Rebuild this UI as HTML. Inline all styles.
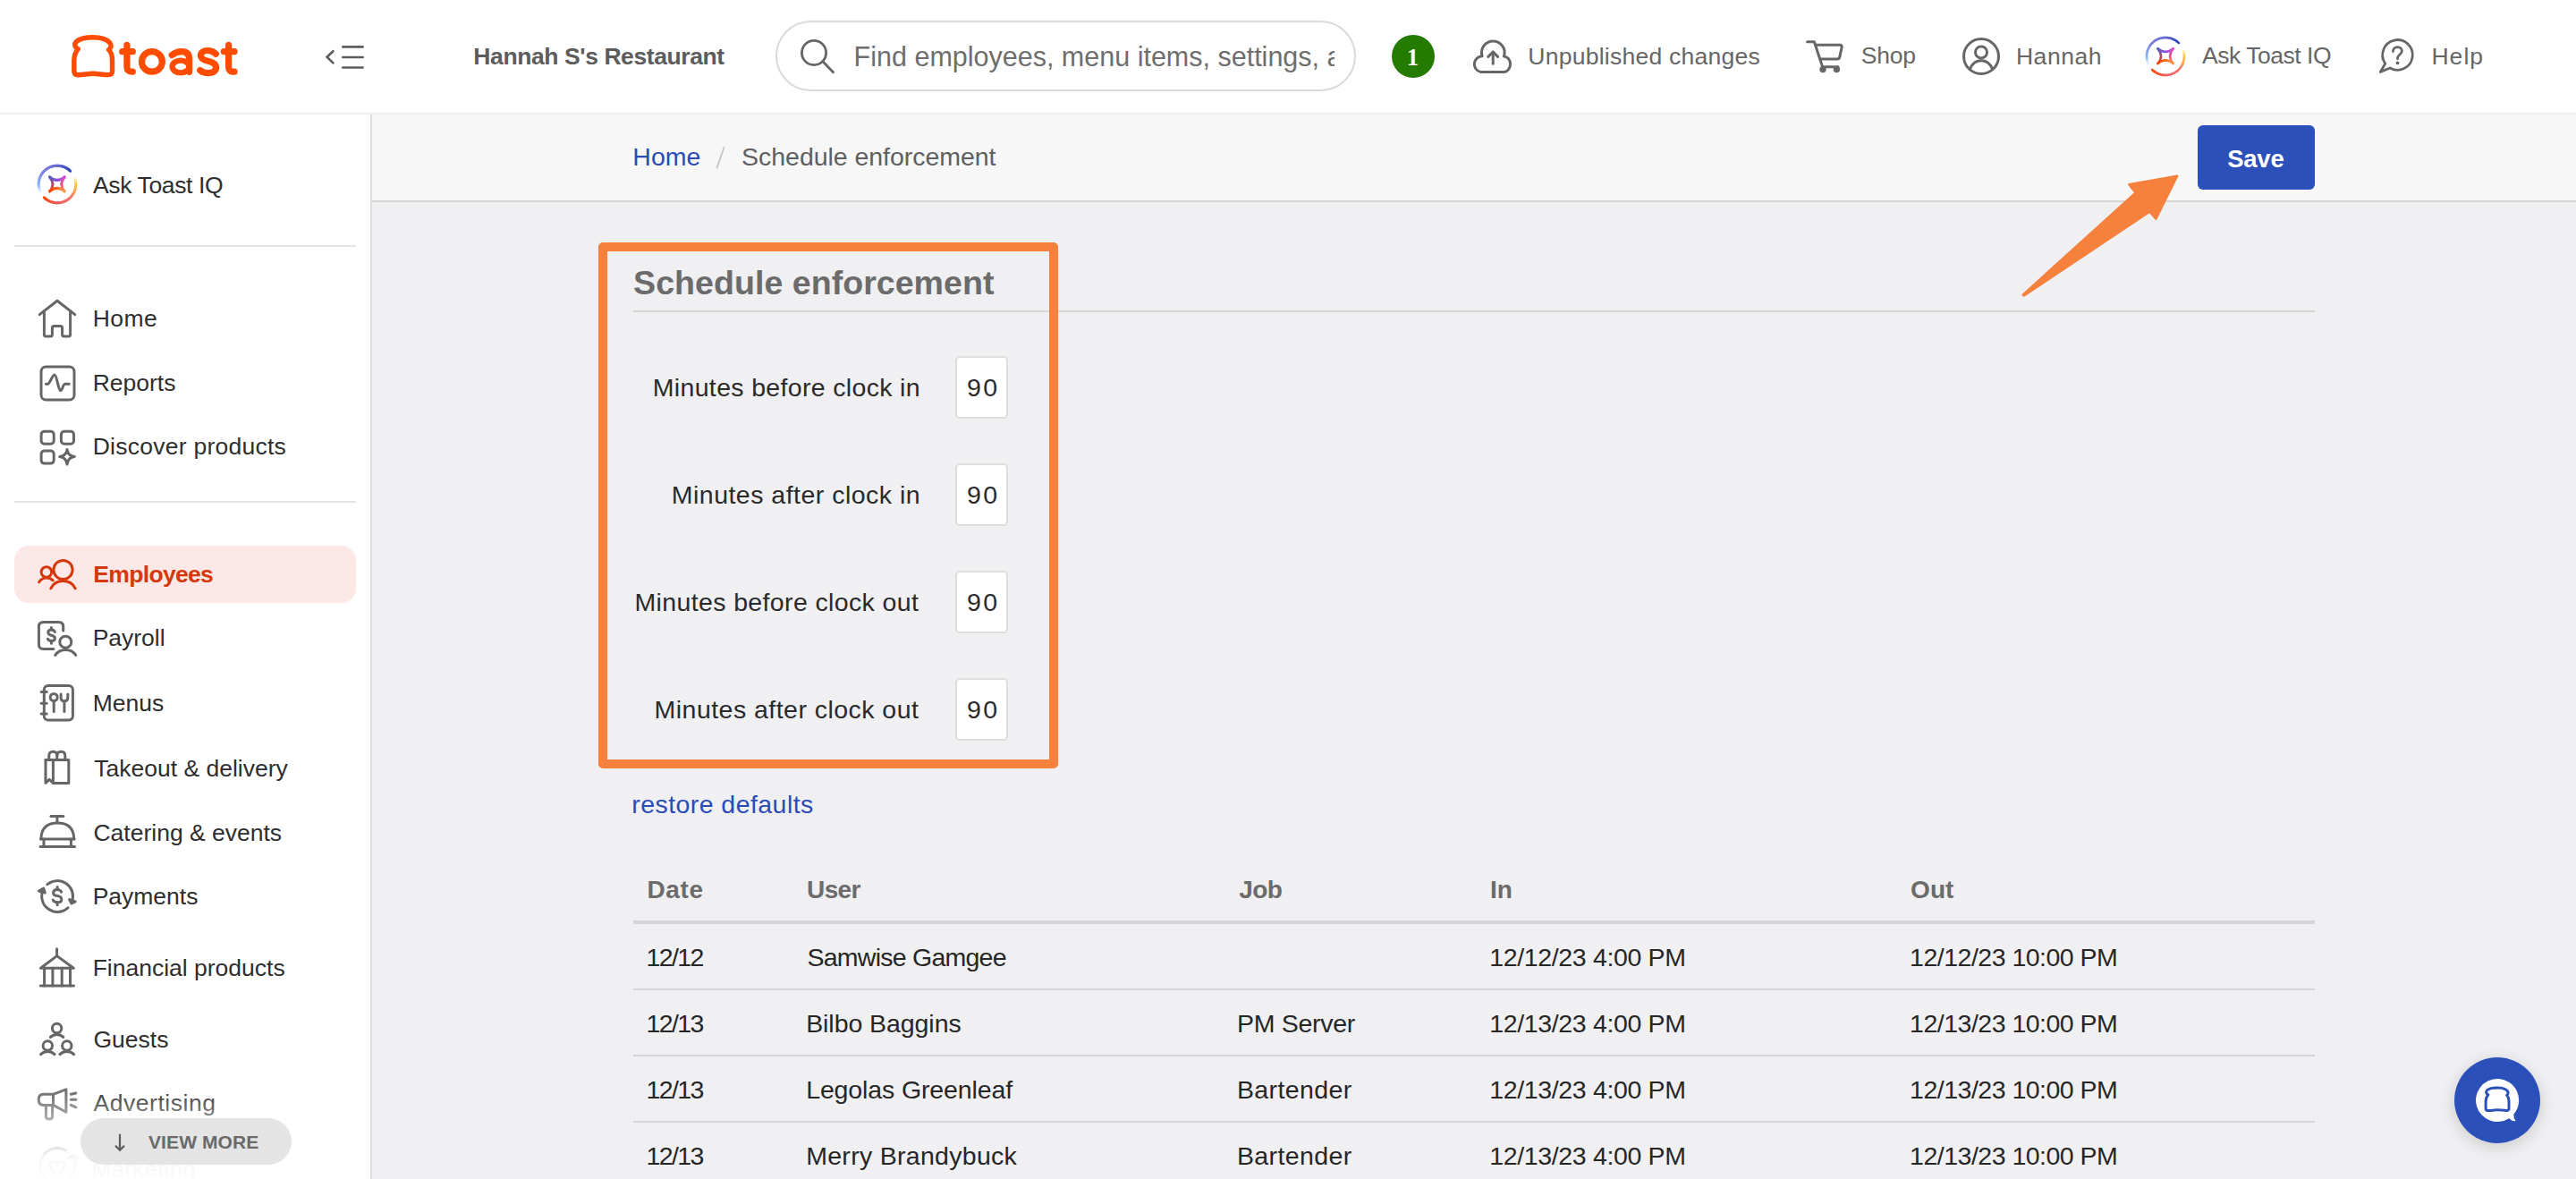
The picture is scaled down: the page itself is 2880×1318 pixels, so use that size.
<!DOCTYPE html>
<html><head><meta charset="utf-8"><title>Schedule enforcement</title>
<style>
html,body{margin:0;padding:0;width:2880px;height:1318px;overflow:hidden;background:#f0f0f2;font-family:"Liberation Sans",sans-serif}
.t{position:absolute;white-space:nowrap;font-family:"Liberation Sans",sans-serif}
svg{overflow:visible}
</style></head><body>
<div style="position:absolute;left:0px;top:0px;width:2880px;height:126px;background:#ffffff;"></div>
<div style="position:absolute;left:0px;top:126px;width:2880px;height:2px;background:#eeeeee;"></div>
<div style="position:absolute;left:0px;top:128px;width:414px;height:1190px;background:#ffffff;"></div>
<div style="position:absolute;left:414px;top:128px;width:2px;height:1190px;background:#dedede;"></div>
<div style="position:absolute;left:416px;top:128px;width:2464px;height:96px;background:#f7f7f7;"></div>
<div style="position:absolute;left:416px;top:224px;width:2464px;height:2px;background:#d5d5d5;"></div>
<div style="position:absolute;left:416px;top:226px;width:2464px;height:1092px;background:#f0f0f2;"></div>
<svg style="position:absolute;left:70px;top:30px;" width="210" height="65" viewBox="0 0 210 65"><g fill="none" stroke="#ff4c00" stroke-linecap="round" stroke-linejoin="round">
<path stroke-width="5.4" d="M17.3,24.8 C13.2,22.6 12.6,19 15.6,16.3 C20.5,12.3 27,11.8 34,11.8 C41,11.8 48,12.6 52.6,17.6 C55,20.6 54.4,23.5 51.6,25.6 C54.6,28.4 55.5,31.5 55.5,38 L55.5,49.5 C55.5,52.5 54,53.6 51,53.6 C45,53.6 40,52.3 34,52.3 C28,52.3 23,53.8 17,53.8 C14.5,53.8 12.8,52.3 12.8,49 L12.8,38 C12.8,31.5 14,28.5 17.3,24.8 Z"/>
<g stroke-width="7.2"><path d="M71.9,20.4 V44.5 C71.9,48.8 73.8,50.2 78.3,50.2"/><path d="M66.7,27.7 H78.3"/>
<ellipse cx="99.9" cy="38.9" rx="11.4" ry="11.3"/>
<path d="M122.2,31.6 C125.5,28.8 129.5,27.6 133,27.6 C138.8,27.6 141.6,30.6 141.6,36.2 V50.3"/>
<ellipse cx="132" cy="44.5" rx="9.4" ry="6.9" stroke-width="6.4"/>
<path d="M171.3,30.4 C168.8,27.6 165.5,26.5 161.8,26.5 C157.2,26.5 154.4,28.9 154.4,32.2 C154.4,35.8 157.8,37.1 162.6,38.3 C168.3,39.6 171.6,41.4 171.6,45.6 C171.6,49.6 168,51.6 162.6,51.6 C158.3,51.6 155.6,50.1 153.7,48.6"/>
<path d="M185.6,20.4 V44.5 C185.6,48.8 187.5,50.2 192,50.2"/><path d="M180.4,27.7 H192"/></g></g></svg>
<svg style="position:absolute;left:355px;top:45px;" width="60" height="40" viewBox="0 0 60 40"><g fill="none" stroke="#5e5e5e" stroke-width="2.7" stroke-linecap="round" stroke-linejoin="miter">
<path d="M17.4,12.2 L10.6,18.8 L17.4,25.4"/><path d="M28.3,7.4 H50.6"/><path d="M28.3,19 H50.6"/><path d="M28.3,30.5 H50.6"/></g></svg>
<div style="position:absolute;left:867px;top:23px;width:645px;height:75px;border:2px solid #dadada;border-radius:40px;background:#fff"></div>
<svg style="position:absolute;left:885px;top:35px;" width="60" height="60" viewBox="0 0 60 60"><g fill="none" stroke="#666" stroke-width="2.8" stroke-linecap="round"><circle cx="25" cy="24" r="13.6"/><path d="M34.7,33.6 L46.5,45.7"/></g></svg>
<div class="t" style="left:529.34px;top:49.74px;font-size:26.5px;line-height:26.5px;font-weight:bold;color:#5c5c5c;letter-spacing:-0.413px;font-family:'Liberation Sans';">Hannah S's Restaurant</div>
<div style="position:absolute;left:940px;top:30px;width:552px;height:70px;overflow:hidden">
<div class="t" style="left:14.62px;top:18.38px;font-size:30.5px;line-height:30.5px;font-weight:normal;color:#6e6e6e;letter-spacing:0.000px;font-family:'Liberation Sans';">Find employees, menu items, settings, and more</div>
</div>
<div style="position:absolute;left:1556px;top:39px;width:48px;height:48px;border-radius:24px;background:#257b00"></div>
<svg style="position:absolute;left:1644px;top:44px;" width="50" height="42" viewBox="0 0 50 42"><g fill="none" stroke="#666" stroke-width="3" stroke-linecap="round" stroke-linejoin="round">
<path d="M11,36.4 H38 A7.6,8.8 0 0 0 37.4,18.9 A12.8,12.8 0 1 0 13.1,18.7 A9,9 0 0 0 11,36.4 Z"/>
<path d="M25.2,27.2 V14"/><path d="M19.8,19.4 L25.2,14 L30.6,19.4"/></g></svg>
<svg style="position:absolute;left:2010px;top:30px;" width="60" height="60" viewBox="0 0 60 60"><g fill="none" stroke="#666" stroke-width="3" stroke-linecap="round" stroke-linejoin="round">
<path d="M10.6,16.8 H18.4 L27.6,44.8 H45"/><path d="M19.6,20.3 H47 Q49.6,20.3 49.1,22.8 L46.8,33.6 Q46.3,36 43.8,36 H25"/></g>
<g fill="#666"><circle cx="28" cy="47.6" r="3.7"/><circle cx="43.4" cy="47.6" r="3.7"/></g></svg>
<svg style="position:absolute;left:2190px;top:38px;" width="50" height="50" viewBox="0 0 50 50"><g fill="none" stroke="#666" stroke-width="3" stroke-linecap="round">
<circle cx="25" cy="25" r="19.5"/><circle cx="25" cy="20.4" r="6.5"/><path d="M12.6,38.8 C15,33.2 19.6,29.8 25,29.8 C30.4,29.8 35,33.2 37.4,38.8"/></g></svg>
<svg style="position:absolute;left:2390px;top:30px;" width="60" height="66" viewBox="0 0 60 66"><defs>
<linearGradient id="iqT31" gradientUnits="userSpaceOnUse" x1="22.40000000000009" y1="0" x2="39.69999999999982" y2="0"><stop offset="0" stop-color="#4b62cc"/><stop offset="0.5" stop-color="#8a4fd8"/><stop offset="1" stop-color="#d84ad6"/></linearGradient>
<linearGradient id="iqB31" gradientUnits="userSpaceOnUse" x1="22.40000000000009" y1="0" x2="39.69999999999982" y2="0"><stop offset="0" stop-color="#ff4300"/><stop offset="0.5" stop-color="#ff6a20"/><stop offset="1" stop-color="#ffa048"/></linearGradient>
<linearGradient id="iqL31" gradientUnits="userSpaceOnUse" x1="0" y1="24.299999999999997" x2="0" y2="41"><stop offset="0" stop-color="#5a5ac8"/><stop offset="0.5" stop-color="#b04870"/><stop offset="1" stop-color="#ff4a00"/></linearGradient>
<linearGradient id="iqR31" gradientUnits="userSpaceOnUse" x1="0" y1="24.299999999999997" x2="0" y2="41"><stop offset="0" stop-color="#d84ad6"/><stop offset="0.5" stop-color="#e8508a"/><stop offset="1" stop-color="#ff9a40"/></linearGradient></defs><path d="M50.77,25.92 A21,21 0 0 0 50.33,24.79" stroke="#fffcf1" stroke-width="2.6" fill="none" stroke-linecap="butt"/><path d="M51.14,27.06 A21,21 0 0 0 50.51,25.24" stroke="#fff5d6" stroke-width="2.6" fill="none" stroke-linecap="butt"/><path d="M51.45,28.23 A21,21 0 0 0 50.93,26.37" stroke="#ffeebb" stroke-width="2.6" fill="none" stroke-linecap="butt"/><path d="M51.69,29.41 A21,21 0 0 0 51.27,27.53" stroke="#ffe79f" stroke-width="2.6" fill="none" stroke-linecap="butt"/><path d="M51.86,30.61 A21,21 0 0 0 51.56,28.70" stroke="#ffe184" stroke-width="2.6" fill="none" stroke-linecap="butt"/><path d="M51.97,31.81 A21,21 0 0 0 51.77,29.89" stroke="#ffda69" stroke-width="2.6" fill="none" stroke-linecap="butt"/><path d="M52.00,33.02 A21,21 0 0 0 51.91,31.09" stroke="#ffd34d" stroke-width="2.6" fill="none" stroke-linecap="butt"/><path d="M51.96,34.22 A21,21 0 0 0 51.99,32.29" stroke="#ffcd42" stroke-width="2.6" fill="none" stroke-linecap="butt"/><path d="M51.86,35.42 A21,21 0 0 0 51.99,33.50" stroke="#fec645" stroke-width="2.6" fill="none" stroke-linecap="butt"/><path d="M51.69,36.62 A21,21 0 0 0 51.93,34.70" stroke="#fdc048" stroke-width="2.6" fill="none" stroke-linecap="butt"/><path d="M51.44,37.80 A21,21 0 0 0 51.80,35.90" stroke="#fdb94c" stroke-width="2.6" fill="none" stroke-linecap="butt"/><path d="M51.14,38.96 A21,21 0 0 0 51.60,37.09" stroke="#fcb34f" stroke-width="2.6" fill="none" stroke-linecap="butt"/><path d="M50.76,40.11 A21,21 0 0 0 51.33,38.27" stroke="#fbad53" stroke-width="2.6" fill="none" stroke-linecap="butt"/><path d="M50.32,41.23 A21,21 0 0 0 50.99,39.43" stroke="#fba656" stroke-width="2.6" fill="none" stroke-linecap="butt"/><path d="M49.81,42.33 A21,21 0 0 0 50.59,40.56" stroke="#faa059" stroke-width="2.6" fill="none" stroke-linecap="butt"/><path d="M49.25,43.39 A21,21 0 0 0 50.12,41.68" stroke="#f9995d" stroke-width="2.6" fill="none" stroke-linecap="butt"/><path d="M48.62,44.42 A21,21 0 0 0 49.59,42.76" stroke="#f99360" stroke-width="2.6" fill="none" stroke-linecap="butt"/><path d="M47.94,45.42 A21,21 0 0 0 49.00,43.81" stroke="#f88c63" stroke-width="2.6" fill="none" stroke-linecap="butt"/><path d="M47.19,46.37 A21,21 0 0 0 48.35,44.83" stroke="#f78667" stroke-width="2.6" fill="none" stroke-linecap="butt"/><path d="M46.40,47.28 A21,21 0 0 0 47.65,45.80" stroke="#f77f6a" stroke-width="2.6" fill="none" stroke-linecap="butt"/><path d="M45.55,48.14 A21,21 0 0 0 46.88,46.74" stroke="#f6796d" stroke-width="2.6" fill="none" stroke-linecap="butt"/><path d="M44.66,48.95 A21,21 0 0 0 46.07,47.63" stroke="#f6766d" stroke-width="2.6" fill="none" stroke-linecap="butt"/><path d="M43.72,49.71 A21,21 0 0 0 45.20,48.47" stroke="#f5746d" stroke-width="2.6" fill="none" stroke-linecap="butt"/><path d="M42.74,50.41 A21,21 0 0 0 44.29,49.26" stroke="#f5726c" stroke-width="2.6" fill="none" stroke-linecap="butt"/><path d="M41.72,51.06 A21,21 0 0 0 43.34,49.99" stroke="#f4706b" stroke-width="2.6" fill="none" stroke-linecap="butt"/><path d="M40.67,51.64 A21,21 0 0 0 42.34,50.68" stroke="#f46e6a" stroke-width="2.6" fill="none" stroke-linecap="butt"/><path d="M39.58,52.17 A21,21 0 0 0 41.31,51.30" stroke="#f36c6a" stroke-width="2.6" fill="none" stroke-linecap="butt"/><path d="M38.47,52.63 A21,21 0 0 0 40.24,51.86" stroke="#f36a69" stroke-width="2.6" fill="none" stroke-linecap="butt"/><path d="M37.33,53.02 A21,21 0 0 0 39.14,52.36" stroke="#f36868" stroke-width="2.6" fill="none" stroke-linecap="butt"/><path d="M36.17,53.35 A21,21 0 0 0 38.02,52.79" stroke="#f26668" stroke-width="2.6" fill="none" stroke-linecap="butt"/><path d="M34.99,53.62 A21,21 0 0 0 36.87,53.16" stroke="#f26467" stroke-width="2.6" fill="none" stroke-linecap="butt"/><path d="M33.80,53.81 A21,21 0 0 0 35.70,53.47" stroke="#f16266" stroke-width="2.6" fill="none" stroke-linecap="butt"/><path d="M32.60,53.94 A21,21 0 0 0 34.52,53.70" stroke="#f16065" stroke-width="2.6" fill="none" stroke-linecap="butt"/><path d="M31.40,54.00 A21,21 0 0 0 33.32,53.87" stroke="#f05e65" stroke-width="2.6" fill="none" stroke-linecap="butt"/><path d="M30.19,53.98 A21,21 0 0 0 32.12,53.97" stroke="#f05c63" stroke-width="2.6" fill="none" stroke-linecap="butt"/><path d="M28.99,53.90 A21,21 0 0 0 30.91,54.00" stroke="#f15a5d" stroke-width="2.6" fill="none" stroke-linecap="butt"/><path d="M27.79,53.75 A21,21 0 0 0 29.71,53.96" stroke="#f25957" stroke-width="2.6" fill="none" stroke-linecap="butt"/><path d="M26.60,53.53 A21,21 0 0 0 28.51,53.85" stroke="#f35851" stroke-width="2.6" fill="none" stroke-linecap="butt"/><path d="M25.43,53.25 A21,21 0 0 0 27.31,53.67" stroke="#f5574a" stroke-width="2.6" fill="none" stroke-linecap="butt"/><path d="M24.28,52.90 A21,21 0 0 0 26.13,53.43" stroke="#f65544" stroke-width="2.6" fill="none" stroke-linecap="butt"/><path d="M23.15,52.48 A21,21 0 0 0 24.97,53.12" stroke="#f7543e" stroke-width="2.6" fill="none" stroke-linecap="butt"/><path d="M22.04,51.99 A21,21 0 0 0 23.82,52.74" stroke="#f85338" stroke-width="2.6" fill="none" stroke-linecap="butt"/><path d="M20.97,51.45 A21,21 0 0 0 22.70,52.29" stroke="#f95132" stroke-width="2.6" fill="none" stroke-linecap="butt"/><path d="M19.92,50.84 A21,21 0 0 0 21.61,51.78" stroke="#fa502c" stroke-width="2.6" fill="none" stroke-linecap="butt"/><path d="M18.92,50.18 A21,21 0 0 0 20.54,51.21" stroke="#fb4f26" stroke-width="2.6" fill="none" stroke-linecap="butt"/><path d="M17.95,49.45 A21,21 0 0 0 19.52,50.58" stroke="#fc4d1f" stroke-width="2.6" fill="none" stroke-linecap="butt"/><path d="M17.03,48.68 A21,21 0 0 0 18.53,49.89" stroke="#fd4c19" stroke-width="2.6" fill="none" stroke-linecap="butt"/><path d="M16.15,47.85 A21,21 0 0 0 17.58,49.15" stroke="#fe4b13" stroke-width="2.6" fill="none" stroke-linecap="round"/><path d="M11.62,41.09 A21,21 0 0 0 12.13,42.21" stroke="#f7faff" stroke-width="2.6" fill="none" stroke-linecap="butt"/><path d="M11.18,39.94 A21,21 0 0 0 11.91,41.76" stroke="#e8f1ff" stroke-width="2.6" fill="none" stroke-linecap="butt"/><path d="M10.81,38.77 A21,21 0 0 0 11.44,40.63" stroke="#d9e8ff" stroke-width="2.6" fill="none" stroke-linecap="butt"/><path d="M10.50,37.58 A21,21 0 0 0 11.02,39.47" stroke="#cadfff" stroke-width="2.6" fill="none" stroke-linecap="butt"/><path d="M10.27,36.37 A21,21 0 0 0 10.68,38.29" stroke="#bbd6ff" stroke-width="2.6" fill="none" stroke-linecap="butt"/><path d="M10.11,35.15 A21,21 0 0 0 10.40,37.09" stroke="#accdff" stroke-width="2.6" fill="none" stroke-linecap="butt"/><path d="M10.02,33.92 A21,21 0 0 0 10.20,35.88" stroke="#9dc3ff" stroke-width="2.6" fill="none" stroke-linecap="butt"/><path d="M10.00,32.69 A21,21 0 0 0 10.07,34.66" stroke="#8ebaff" stroke-width="2.6" fill="none" stroke-linecap="butt"/><path d="M10.06,31.47 A21,21 0 0 0 10.00,33.43" stroke="#89b5fd" stroke-width="2.6" fill="none" stroke-linecap="butt"/><path d="M10.18,30.24 A21,21 0 0 0 10.02,32.20" stroke="#88b0fa" stroke-width="2.6" fill="none" stroke-linecap="butt"/><path d="M10.38,29.03 A21,21 0 0 0 10.10,30.98" stroke="#88acf8" stroke-width="2.6" fill="none" stroke-linecap="butt"/><path d="M10.65,27.83 A21,21 0 0 0 10.25,29.76" stroke="#87a8f5" stroke-width="2.6" fill="none" stroke-linecap="butt"/><path d="M10.98,26.65 A21,21 0 0 0 10.48,28.55" stroke="#86a3f3" stroke-width="2.6" fill="none" stroke-linecap="butt"/><path d="M11.39,25.49 A21,21 0 0 0 10.77,27.36" stroke="#859ff0" stroke-width="2.6" fill="none" stroke-linecap="butt"/><path d="M11.86,24.35 A21,21 0 0 0 11.14,26.18" stroke="#849aed" stroke-width="2.6" fill="none" stroke-linecap="butt"/><path d="M12.40,23.25 A21,21 0 0 0 11.57,25.03" stroke="#8396eb" stroke-width="2.6" fill="none" stroke-linecap="butt"/><path d="M13.00,22.18 A21,21 0 0 0 12.07,23.91" stroke="#8292e8" stroke-width="2.6" fill="none" stroke-linecap="butt"/><path d="M13.67,21.14 A21,21 0 0 0 12.63,22.82" stroke="#818de6" stroke-width="2.6" fill="none" stroke-linecap="butt"/><path d="M14.39,20.15 A21,21 0 0 0 13.26,21.76" stroke="#8089e3" stroke-width="2.6" fill="none" stroke-linecap="butt"/><path d="M15.17,19.20 A21,21 0 0 0 13.95,20.74" stroke="#7f84e0" stroke-width="2.6" fill="none" stroke-linecap="butt"/><path d="M16.01,18.30 A21,21 0 0 0 14.70,19.76" stroke="#7f80de" stroke-width="2.6" fill="none" stroke-linecap="butt"/><path d="M16.89,17.45 A21,21 0 0 0 15.50,18.83" stroke="#7d7ddc" stroke-width="2.6" fill="none" stroke-linecap="butt"/><path d="M17.83,16.65 A21,21 0 0 0 16.35,17.95" stroke="#7c7bdb" stroke-width="2.6" fill="none" stroke-linecap="butt"/><path d="M18.81,15.90 A21,21 0 0 0 17.26,17.12" stroke="#7a7ada" stroke-width="2.6" fill="none" stroke-linecap="butt"/><path d="M19.83,15.22 A21,21 0 0 0 18.21,16.34" stroke="#7978da" stroke-width="2.6" fill="none" stroke-linecap="butt"/><path d="M20.89,14.60 A21,21 0 0 0 19.21,15.62" stroke="#7777d9" stroke-width="2.6" fill="none" stroke-linecap="butt"/><path d="M21.98,14.04 A21,21 0 0 0 20.25,14.96" stroke="#7575d8" stroke-width="2.6" fill="none" stroke-linecap="butt"/><path d="M23.10,13.54 A21,21 0 0 0 21.32,14.36" stroke="#7474d7" stroke-width="2.6" fill="none" stroke-linecap="butt"/><path d="M24.26,13.11 A21,21 0 0 0 22.43,13.83" stroke="#7273d7" stroke-width="2.6" fill="none" stroke-linecap="butt"/><path d="M25.43,12.75 A21,21 0 0 0 23.56,13.36" stroke="#7071d6" stroke-width="2.6" fill="none" stroke-linecap="butt"/><path d="M26.63,12.46 A21,21 0 0 0 24.72,12.96" stroke="#6f70d5" stroke-width="2.6" fill="none" stroke-linecap="butt"/><path d="M27.84,12.24 A21,21 0 0 0 25.91,12.63" stroke="#6d6ed4" stroke-width="2.6" fill="none" stroke-linecap="butt"/><path d="M29.06,12.09 A21,21 0 0 0 27.11,12.36" stroke="#6b6dd4" stroke-width="2.6" fill="none" stroke-linecap="butt"/><path d="M30.28,12.01 A21,21 0 0 0 28.32,12.17" stroke="#6a6cd3" stroke-width="2.6" fill="none" stroke-linecap="butt"/><path d="M31.51,12.01 A21,21 0 0 0 29.55,12.05" stroke="#686ad2" stroke-width="2.6" fill="none" stroke-linecap="butt"/><path d="M32.74,12.07 A21,21 0 0 0 30.77,12.00" stroke="#6467d0" stroke-width="2.6" fill="none" stroke-linecap="butt"/><path d="M33.96,12.21 A21,21 0 0 0 32.00,12.02" stroke="#5f65ce" stroke-width="2.6" fill="none" stroke-linecap="butt"/><path d="M35.17,12.42 A21,21 0 0 0 33.23,12.12" stroke="#5b62cc" stroke-width="2.6" fill="none" stroke-linecap="butt"/><path d="M36.37,12.70 A21,21 0 0 0 34.45,12.28" stroke="#565fca" stroke-width="2.6" fill="none" stroke-linecap="butt"/><path d="M37.55,13.05 A21,21 0 0 0 35.65,12.52" stroke="#525cc8" stroke-width="2.6" fill="none" stroke-linecap="butt"/><path d="M38.70,13.46 A21,21 0 0 0 36.84,12.83" stroke="#4d5ac7" stroke-width="2.6" fill="none" stroke-linecap="butt"/><path d="M39.83,13.95 A21,21 0 0 0 38.01,13.21" stroke="#4957c5" stroke-width="2.6" fill="none" stroke-linecap="butt"/><path d="M40.93,14.50 A21,21 0 0 0 39.16,13.65" stroke="#4454c3" stroke-width="2.6" fill="none" stroke-linecap="butt"/><path d="M42.00,15.11 A21,21 0 0 0 40.28,14.16" stroke="#3f51c1" stroke-width="2.6" fill="none" stroke-linecap="butt"/><path d="M43.03,15.78 A21,21 0 0 0 41.36,14.74" stroke="#3b4fbf" stroke-width="2.6" fill="none" stroke-linecap="butt"/><path d="M44.01,16.52 A21,21 0 0 0 42.41,15.37" stroke="#364cbd" stroke-width="2.6" fill="none" stroke-linecap="butt"/><path d="M44.96,17.31 A21,21 0 0 0 43.43,16.07" stroke="#3249bb" stroke-width="2.6" fill="none" stroke-linecap="butt"/><path d="M45.85,18.15 A21,21 0 0 0 44.40,16.83" stroke="#2d46b9" stroke-width="2.6" fill="none" stroke-linecap="round"/><path d="M22.40000000000009,24.299999999999997 Q31.049999999999955,31.496799999999883 39.69999999999982,24.299999999999997" stroke="url(#iqT31)" stroke-width="2.6" fill="none" stroke-linecap="round"/><path d="M22.40000000000009,41 Q31.049999999999955,33.80320000000011 39.69999999999982,41" stroke="url(#iqB31)" stroke-width="2.6" fill="none" stroke-linecap="round"/><path d="M22.40000000000009,24.299999999999997 Q29.596799999999977,32.65 22.40000000000009,41" stroke="url(#iqL31)" stroke-width="2.6" fill="none" stroke-linecap="round"/><path d="M39.69999999999982,24.299999999999997 Q32.50319999999993,32.65 39.69999999999982,41" stroke="url(#iqR31)" stroke-width="2.6" fill="none" stroke-linecap="round"/></svg>
<svg style="position:absolute;left:2650px;top:35px;" width="60" height="55" viewBox="0 0 60 55"><g fill="none" stroke="#666" stroke-width="2.8" stroke-linecap="round" stroke-linejoin="round">
<path d="M16.74,36.04 A16.8,16.8 0 1 1 22.1,40.95 L11.3,45.5 Z"/>
<path d="M25.4,22.6 C25.4,19.4 27.6,17.6 30.4,17.6 C33.2,17.6 35.4,19.5 35.4,22.2 C35.4,25.4 30.5,26.2 30.5,30.2 V30.8"/></g>
<circle cx="30.5" cy="35.4" r="1.9" fill="#666"/></svg>
<svg style="position:absolute;left:34px;top:176px;" width="60" height="60" viewBox="0 0 60 60"><defs>
<linearGradient id="iqT30" gradientUnits="userSpaceOnUse" x1="21.5" y1="0" x2="38.2" y2="0"><stop offset="0" stop-color="#4b62cc"/><stop offset="0.5" stop-color="#8a4fd8"/><stop offset="1" stop-color="#d84ad6"/></linearGradient>
<linearGradient id="iqB30" gradientUnits="userSpaceOnUse" x1="21.5" y1="0" x2="38.2" y2="0"><stop offset="0" stop-color="#ff4300"/><stop offset="0.5" stop-color="#ff6a20"/><stop offset="1" stop-color="#ffa048"/></linearGradient>
<linearGradient id="iqL30" gradientUnits="userSpaceOnUse" x1="0" y1="21.900000000000006" x2="0" y2="37.900000000000006"><stop offset="0" stop-color="#5a5ac8"/><stop offset="0.5" stop-color="#b04870"/><stop offset="1" stop-color="#ff4a00"/></linearGradient>
<linearGradient id="iqR30" gradientUnits="userSpaceOnUse" x1="0" y1="21.900000000000006" x2="0" y2="37.900000000000006"><stop offset="0" stop-color="#d84ad6"/><stop offset="0.5" stop-color="#e8508a"/><stop offset="1" stop-color="#ff9a40"/></linearGradient></defs><path d="M49.58,22.99 A20.8,20.8 0 0 0 49.15,21.87" stroke="#fffcf1" stroke-width="3" fill="none" stroke-linecap="butt"/><path d="M49.95,24.12 A20.8,20.8 0 0 0 49.33,22.31" stroke="#fff5d6" stroke-width="3" fill="none" stroke-linecap="butt"/><path d="M50.26,25.28 A20.8,20.8 0 0 0 49.74,23.44" stroke="#ffeebb" stroke-width="3" fill="none" stroke-linecap="butt"/><path d="M50.49,26.45 A20.8,20.8 0 0 0 50.08,24.58" stroke="#ffe79f" stroke-width="3" fill="none" stroke-linecap="butt"/><path d="M50.66,27.63 A20.8,20.8 0 0 0 50.36,25.74" stroke="#ffe184" stroke-width="3" fill="none" stroke-linecap="butt"/><path d="M50.77,28.82 A20.8,20.8 0 0 0 50.57,26.92" stroke="#ffda69" stroke-width="3" fill="none" stroke-linecap="butt"/><path d="M50.80,30.02 A20.8,20.8 0 0 0 50.71,28.11" stroke="#ffd34d" stroke-width="3" fill="none" stroke-linecap="butt"/><path d="M50.76,31.21 A20.8,20.8 0 0 0 50.79,29.30" stroke="#ffcd42" stroke-width="3" fill="none" stroke-linecap="butt"/><path d="M50.66,32.40 A20.8,20.8 0 0 0 50.79,30.49" stroke="#fec645" stroke-width="3" fill="none" stroke-linecap="butt"/><path d="M50.49,33.58 A20.8,20.8 0 0 0 50.73,31.69" stroke="#fdc048" stroke-width="3" fill="none" stroke-linecap="butt"/><path d="M50.25,34.75 A20.8,20.8 0 0 0 50.60,32.87" stroke="#fdb94c" stroke-width="3" fill="none" stroke-linecap="butt"/><path d="M49.94,35.91 A20.8,20.8 0 0 0 50.40,34.05" stroke="#fcb34f" stroke-width="3" fill="none" stroke-linecap="butt"/><path d="M49.57,37.04 A20.8,20.8 0 0 0 50.14,35.22" stroke="#fbad53" stroke-width="3" fill="none" stroke-linecap="butt"/><path d="M49.13,38.16 A20.8,20.8 0 0 0 49.80,36.36" stroke="#fba656" stroke-width="3" fill="none" stroke-linecap="butt"/><path d="M48.63,39.24 A20.8,20.8 0 0 0 49.40,37.49" stroke="#faa059" stroke-width="3" fill="none" stroke-linecap="butt"/><path d="M48.07,40.30 A20.8,20.8 0 0 0 48.94,38.59" stroke="#f9995d" stroke-width="3" fill="none" stroke-linecap="butt"/><path d="M47.45,41.32 A20.8,20.8 0 0 0 48.42,39.67" stroke="#f99360" stroke-width="3" fill="none" stroke-linecap="butt"/><path d="M46.77,42.30 A20.8,20.8 0 0 0 47.83,40.71" stroke="#f88c63" stroke-width="3" fill="none" stroke-linecap="butt"/><path d="M46.04,43.24 A20.8,20.8 0 0 0 47.19,41.71" stroke="#f78667" stroke-width="3" fill="none" stroke-linecap="butt"/><path d="M45.25,44.14 A20.8,20.8 0 0 0 46.49,42.68" stroke="#f77f6a" stroke-width="3" fill="none" stroke-linecap="butt"/><path d="M44.42,44.99 A20.8,20.8 0 0 0 45.73,43.61" stroke="#f6796d" stroke-width="3" fill="none" stroke-linecap="butt"/><path d="M43.53,45.80 A20.8,20.8 0 0 0 44.92,44.49" stroke="#f6766d" stroke-width="3" fill="none" stroke-linecap="butt"/><path d="M42.60,46.55 A20.8,20.8 0 0 0 44.07,45.32" stroke="#f5746d" stroke-width="3" fill="none" stroke-linecap="butt"/><path d="M41.63,47.24 A20.8,20.8 0 0 0 43.16,46.10" stroke="#f5726c" stroke-width="3" fill="none" stroke-linecap="butt"/><path d="M40.62,47.88 A20.8,20.8 0 0 0 42.22,46.83" stroke="#f4706b" stroke-width="3" fill="none" stroke-linecap="butt"/><path d="M39.58,48.46 A20.8,20.8 0 0 0 41.23,47.51" stroke="#f46e6a" stroke-width="3" fill="none" stroke-linecap="butt"/><path d="M38.50,48.98 A20.8,20.8 0 0 0 40.21,48.12" stroke="#f36c6a" stroke-width="3" fill="none" stroke-linecap="butt"/><path d="M37.40,49.44 A20.8,20.8 0 0 0 39.15,48.68" stroke="#f36a69" stroke-width="3" fill="none" stroke-linecap="butt"/><path d="M36.27,49.83 A20.8,20.8 0 0 0 38.06,49.17" stroke="#f36868" stroke-width="3" fill="none" stroke-linecap="butt"/><path d="M35.12,50.16 A20.8,20.8 0 0 0 36.95,49.60" stroke="#f26668" stroke-width="3" fill="none" stroke-linecap="butt"/><path d="M33.95,50.42 A20.8,20.8 0 0 0 35.81,49.97" stroke="#f26467" stroke-width="3" fill="none" stroke-linecap="butt"/><path d="M32.77,50.61 A20.8,20.8 0 0 0 34.66,50.27" stroke="#f16266" stroke-width="3" fill="none" stroke-linecap="butt"/><path d="M31.59,50.74 A20.8,20.8 0 0 0 33.48,50.51" stroke="#f16065" stroke-width="3" fill="none" stroke-linecap="butt"/><path d="M30.39,50.80 A20.8,20.8 0 0 0 32.30,50.67" stroke="#f05e65" stroke-width="3" fill="none" stroke-linecap="butt"/><path d="M29.20,50.78 A20.8,20.8 0 0 0 31.11,50.77" stroke="#f05c63" stroke-width="3" fill="none" stroke-linecap="butt"/><path d="M28.01,50.70 A20.8,20.8 0 0 0 29.92,50.80" stroke="#f15a5d" stroke-width="3" fill="none" stroke-linecap="butt"/><path d="M26.82,50.56 A20.8,20.8 0 0 0 28.72,50.76" stroke="#f25957" stroke-width="3" fill="none" stroke-linecap="butt"/><path d="M25.65,50.34 A20.8,20.8 0 0 0 27.53,50.65" stroke="#f35851" stroke-width="3" fill="none" stroke-linecap="butt"/><path d="M24.49,50.06 A20.8,20.8 0 0 0 26.35,50.48" stroke="#f5574a" stroke-width="3" fill="none" stroke-linecap="butt"/><path d="M23.34,49.71 A20.8,20.8 0 0 0 25.18,50.23" stroke="#f65544" stroke-width="3" fill="none" stroke-linecap="butt"/><path d="M22.22,49.29 A20.8,20.8 0 0 0 24.03,49.92" stroke="#f7543e" stroke-width="3" fill="none" stroke-linecap="butt"/><path d="M21.13,48.81 A20.8,20.8 0 0 0 22.89,49.55" stroke="#f85338" stroke-width="3" fill="none" stroke-linecap="butt"/><path d="M20.06,48.27 A20.8,20.8 0 0 0 21.78,49.11" stroke="#f95132" stroke-width="3" fill="none" stroke-linecap="butt"/><path d="M19.03,47.67 A20.8,20.8 0 0 0 20.70,48.60" stroke="#fa502c" stroke-width="3" fill="none" stroke-linecap="butt"/><path d="M18.03,47.01 A20.8,20.8 0 0 0 19.64,48.04" stroke="#fb4f26" stroke-width="3" fill="none" stroke-linecap="butt"/><path d="M17.08,46.30 A20.8,20.8 0 0 0 18.63,47.41" stroke="#fc4d1f" stroke-width="3" fill="none" stroke-linecap="butt"/><path d="M16.16,45.53 A20.8,20.8 0 0 0 17.64,46.73" stroke="#fd4c19" stroke-width="3" fill="none" stroke-linecap="butt"/><path d="M15.29,44.71 A20.8,20.8 0 0 0 16.70,46.00" stroke="#fe4b13" stroke-width="3" fill="none" stroke-linecap="round"/><path d="M10.80,38.01 A20.8,20.8 0 0 0 11.31,39.12" stroke="#f7faff" stroke-width="3" fill="none" stroke-linecap="butt"/><path d="M10.37,36.87 A20.8,20.8 0 0 0 11.10,38.68" stroke="#e8f1ff" stroke-width="3" fill="none" stroke-linecap="butt"/><path d="M10.00,35.71 A20.8,20.8 0 0 0 10.62,37.56" stroke="#d9e8ff" stroke-width="3" fill="none" stroke-linecap="butt"/><path d="M9.70,34.53 A20.8,20.8 0 0 0 10.21,36.41" stroke="#cadfff" stroke-width="3" fill="none" stroke-linecap="butt"/><path d="M9.47,33.34 A20.8,20.8 0 0 0 9.87,35.24" stroke="#bbd6ff" stroke-width="3" fill="none" stroke-linecap="butt"/><path d="M9.31,32.13 A20.8,20.8 0 0 0 9.60,34.05" stroke="#accdff" stroke-width="3" fill="none" stroke-linecap="butt"/><path d="M9.22,30.91 A20.8,20.8 0 0 0 9.40,32.85" stroke="#9dc3ff" stroke-width="3" fill="none" stroke-linecap="butt"/><path d="M9.20,29.70 A20.8,20.8 0 0 0 9.27,31.64" stroke="#8ebaff" stroke-width="3" fill="none" stroke-linecap="butt"/><path d="M9.26,28.48 A20.8,20.8 0 0 0 9.20,30.43" stroke="#89b5fd" stroke-width="3" fill="none" stroke-linecap="butt"/><path d="M9.38,27.27 A20.8,20.8 0 0 0 9.21,29.21" stroke="#88b0fa" stroke-width="3" fill="none" stroke-linecap="butt"/><path d="M9.57,26.07 A20.8,20.8 0 0 0 9.30,28.00" stroke="#88acf8" stroke-width="3" fill="none" stroke-linecap="butt"/><path d="M9.84,24.88 A20.8,20.8 0 0 0 9.45,26.79" stroke="#87a8f5" stroke-width="3" fill="none" stroke-linecap="butt"/><path d="M10.17,23.71 A20.8,20.8 0 0 0 9.67,25.59" stroke="#86a3f3" stroke-width="3" fill="none" stroke-linecap="butt"/><path d="M10.58,22.56 A20.8,20.8 0 0 0 9.97,24.41" stroke="#859ff0" stroke-width="3" fill="none" stroke-linecap="butt"/><path d="M11.04,21.44 A20.8,20.8 0 0 0 10.33,23.25" stroke="#849aed" stroke-width="3" fill="none" stroke-linecap="butt"/><path d="M11.58,20.34 A20.8,20.8 0 0 0 10.76,22.11" stroke="#8396eb" stroke-width="3" fill="none" stroke-linecap="butt"/><path d="M12.17,19.28 A20.8,20.8 0 0 0 11.25,20.99" stroke="#8292e8" stroke-width="3" fill="none" stroke-linecap="butt"/><path d="M12.83,18.26 A20.8,20.8 0 0 0 11.81,19.91" stroke="#818de6" stroke-width="3" fill="none" stroke-linecap="butt"/><path d="M13.55,17.27 A20.8,20.8 0 0 0 12.43,18.87" stroke="#8089e3" stroke-width="3" fill="none" stroke-linecap="butt"/><path d="M14.32,16.33 A20.8,20.8 0 0 0 13.11,17.86" stroke="#7f84e0" stroke-width="3" fill="none" stroke-linecap="butt"/><path d="M15.15,15.44 A20.8,20.8 0 0 0 13.85,16.89" stroke="#7f80de" stroke-width="3" fill="none" stroke-linecap="butt"/><path d="M16.03,14.59 A20.8,20.8 0 0 0 14.65,15.97" stroke="#7d7ddc" stroke-width="3" fill="none" stroke-linecap="butt"/><path d="M16.95,13.80 A20.8,20.8 0 0 0 15.49,15.09" stroke="#7c7bdb" stroke-width="3" fill="none" stroke-linecap="butt"/><path d="M17.92,13.07 A20.8,20.8 0 0 0 16.39,14.27" stroke="#7a7ada" stroke-width="3" fill="none" stroke-linecap="butt"/><path d="M18.93,12.39 A20.8,20.8 0 0 0 17.33,13.50" stroke="#7978da" stroke-width="3" fill="none" stroke-linecap="butt"/><path d="M19.98,11.77 A20.8,20.8 0 0 0 18.32,12.79" stroke="#7777d9" stroke-width="3" fill="none" stroke-linecap="butt"/><path d="M21.07,11.22 A20.8,20.8 0 0 0 19.35,12.13" stroke="#7575d8" stroke-width="3" fill="none" stroke-linecap="butt"/><path d="M22.18,10.73 A20.8,20.8 0 0 0 20.41,11.54" stroke="#7474d7" stroke-width="3" fill="none" stroke-linecap="butt"/><path d="M23.32,10.30 A20.8,20.8 0 0 0 21.51,11.01" stroke="#7273d7" stroke-width="3" fill="none" stroke-linecap="butt"/><path d="M24.49,9.94 A20.8,20.8 0 0 0 22.63,10.55" stroke="#7071d6" stroke-width="3" fill="none" stroke-linecap="butt"/><path d="M25.67,9.66 A20.8,20.8 0 0 0 23.78,10.15" stroke="#6f70d5" stroke-width="3" fill="none" stroke-linecap="butt"/><path d="M26.87,9.44 A20.8,20.8 0 0 0 24.96,9.82" stroke="#6d6ed4" stroke-width="3" fill="none" stroke-linecap="butt"/><path d="M28.07,9.29 A20.8,20.8 0 0 0 26.15,9.56" stroke="#6b6dd4" stroke-width="3" fill="none" stroke-linecap="butt"/><path d="M29.29,9.21 A20.8,20.8 0 0 0 27.35,9.37" stroke="#6a6cd3" stroke-width="3" fill="none" stroke-linecap="butt"/><path d="M30.51,9.21 A20.8,20.8 0 0 0 28.56,9.25" stroke="#686ad2" stroke-width="3" fill="none" stroke-linecap="butt"/><path d="M31.72,9.27 A20.8,20.8 0 0 0 29.78,9.20" stroke="#6467d0" stroke-width="3" fill="none" stroke-linecap="butt"/><path d="M32.93,9.41 A20.8,20.8 0 0 0 30.99,9.22" stroke="#5f65ce" stroke-width="3" fill="none" stroke-linecap="butt"/><path d="M34.13,9.61 A20.8,20.8 0 0 0 32.21,9.32" stroke="#5b62cc" stroke-width="3" fill="none" stroke-linecap="butt"/><path d="M35.32,9.89 A20.8,20.8 0 0 0 33.41,9.48" stroke="#565fca" stroke-width="3" fill="none" stroke-linecap="butt"/><path d="M36.49,10.24 A20.8,20.8 0 0 0 34.61,9.72" stroke="#525cc8" stroke-width="3" fill="none" stroke-linecap="butt"/><path d="M37.63,10.65 A20.8,20.8 0 0 0 35.79,10.02" stroke="#4d5ac7" stroke-width="3" fill="none" stroke-linecap="butt"/><path d="M38.75,11.13 A20.8,20.8 0 0 0 36.95,10.39" stroke="#4957c5" stroke-width="3" fill="none" stroke-linecap="butt"/><path d="M39.84,11.67 A20.8,20.8 0 0 0 38.08,10.83" stroke="#4454c3" stroke-width="3" fill="none" stroke-linecap="butt"/><path d="M40.89,12.28 A20.8,20.8 0 0 0 39.19,11.34" stroke="#3f51c1" stroke-width="3" fill="none" stroke-linecap="butt"/><path d="M41.91,12.95 A20.8,20.8 0 0 0 40.26,11.91" stroke="#3b4fbf" stroke-width="3" fill="none" stroke-linecap="butt"/><path d="M42.89,13.67 A20.8,20.8 0 0 0 41.31,12.54" stroke="#364cbd" stroke-width="3" fill="none" stroke-linecap="butt"/><path d="M43.82,14.46 A20.8,20.8 0 0 0 42.31,13.23" stroke="#3249bb" stroke-width="3" fill="none" stroke-linecap="butt"/><path d="M44.71,15.29 A20.8,20.8 0 0 0 43.27,13.98" stroke="#2d46b9" stroke-width="3" fill="none" stroke-linecap="round"/><path d="M21.5,21.900000000000006 Q29.85,28.847200000000008 38.2,21.900000000000006" stroke="url(#iqT30)" stroke-width="3" fill="none" stroke-linecap="round"/><path d="M21.5,37.900000000000006 Q29.85,30.952800000000003 38.2,37.900000000000006" stroke="url(#iqB30)" stroke-width="3" fill="none" stroke-linecap="round"/><path d="M21.5,21.900000000000006 Q28.447200000000002,29.900000000000006 21.5,37.900000000000006" stroke="url(#iqL30)" stroke-width="3" fill="none" stroke-linecap="round"/><path d="M38.2,21.900000000000006 Q31.2528,29.900000000000006 38.2,37.900000000000006" stroke="url(#iqR30)" stroke-width="3" fill="none" stroke-linecap="round"/></svg>
<div style="position:absolute;left:16px;top:274px;width:382px;height:2px;background:#e4e4e4;"></div>
<svg style="position:absolute;left:30px;top:320px;" width="70" height="70" viewBox="0 0 70 70"><g fill="none" stroke="#666666" stroke-width="3" stroke-linecap="round" stroke-linejoin="round">
<path d="M14.2,31.6 L34,16.3 L53.8,31.6"/><path d="M19.4,27.8 V54 Q19.4,56 21.4,56 H26.6 Q28.4,56 28.4,54 V46.6 Q28.4,44.6 30.4,44.6 H37.6 Q39.6,44.6 39.6,46.6 V54 Q39.6,56 41.6,56 H46.6 Q48.6,56 48.6,54 V27.8"/></g></svg>
<svg style="position:absolute;left:30px;top:395px;" width="70" height="70" viewBox="0 0 70 70"><g fill="none" stroke="#666666" stroke-width="3" stroke-linecap="round" stroke-linejoin="round">
<rect x="16" y="15" width="37" height="37" rx="5.5"/><path d="M21.4,34.2 H23.6 C25.5,34.2 28.6,24 31,24 C33.6,24 35.2,41.7 37.6,41.7 C39.8,41.7 40.6,34.2 42.6,34.2 H47.2"/></g></svg>
<svg style="position:absolute;left:30px;top:465px;" width="70" height="70" viewBox="0 0 70 70"><g fill="none" stroke="#666666" stroke-width="3" stroke-linejoin="round">
<rect x="16.1" y="17.2" width="14.1" height="14.1" rx="3.5"/><rect x="38.4" y="17.2" width="14.1" height="14.1" rx="3.5"/><rect x="16.1" y="39" width="14.1" height="14.1" rx="3.5"/>
<path d="M45,37.4 Q45.8,44.4 53.3,45.6 Q45.8,46.8 45,54 Q44.2,46.8 36.7,45.6 Q44.2,44.4 45,37.4 Z"/></g></svg>
<div style="position:absolute;left:16px;top:560px;width:382px;height:2px;background:#e4e4e4;"></div>
<div style="position:absolute;left:16px;top:610px;width:382px;height:64px;border-radius:16px;background:#fce9e7"></div>
<svg style="position:absolute;left:30px;top:600px;" width="70" height="80" viewBox="0 0 70 80"><g fill="none" stroke="#d4380d" stroke-width="3" stroke-linecap="round">
<circle cx="40.5" cy="37" r="10.6"/><circle cx="21.9" cy="39.5" r="5.8"/>
<path d="M26.8,57.8 C29.2,52.6 34.4,49.4 40.5,49.4 C46.6,49.4 51.8,52.6 54.2,57.8"/>
<path d="M13.6,50.8 C15.6,47.6 18.6,46 21.9,46 C24.6,46 27.2,47 29.2,48.8"/></g></svg>
<svg style="position:absolute;left:30px;top:680px;" width="70" height="70" viewBox="0 0 70 70"><g fill="none" stroke="#666666" stroke-width="3" stroke-linecap="round" stroke-linejoin="round">
<path d="M40.7,25 V20.5 Q40.7,15.5 35.7,15.5 H18.4 Q13.4,15.5 13.4,20.5 V40.4 Q13.4,45.4 18.4,45.4 H29.9"/>
<path d="M31.4,26.5 Q30.4,24 27.4,24 Q23.8,24 23.8,27 Q23.8,29.4 27.4,30.2 Q31.4,31 31.4,33.6 Q31.4,36.6 27.4,36.6 Q24.4,36.6 23.4,34.2"/><path d="M27.4,21.4 V24 M27.4,36.6 V39.2"/>
<circle cx="43.3" cy="37.7" r="6.5"/><path d="M31.8,52.4 C34.4,48.6 38.6,46.6 43.3,46.6 C48,46.6 52.2,48.6 54.7,52.4"/></g></svg>
<svg style="position:absolute;left:30px;top:755px;" width="70" height="60" viewBox="0 0 70 60"><g fill="none" stroke="#666666" stroke-width="3" stroke-linecap="round" stroke-linejoin="round">
<rect x="19.3" y="11.6" width="32.1" height="38.5" rx="4.5"/><path d="M16.2,18.6 H22.2 M16.2,31.3 H22.2 M16.2,43.1 H22.2"/>
<circle cx="30.2" cy="24.5" r="4"/><path d="M30.2,28.5 V40.6"/><path d="M38.1,21.1 V25.2 Q38.1,28.7 41.9,28.7 Q45.8,28.7 45.8,25.2 V21.1 M41.9,28.7 V40.6"/></g></svg>
<svg style="position:absolute;left:30px;top:825px;" width="70" height="60" viewBox="0 0 70 60"><g fill="none" stroke="#666666" stroke-width="3" stroke-linecap="round" stroke-linejoin="round">
<path d="M21,24.6 H46.8 V50.5 H29.4"/><path d="M21,24.6 V50.3 L25.2,46.4 L29.4,50.3 V24.6"/>
<path d="M24.8,24.6 V19.8 Q24.8,15.3 29.3,15.3 Q33.8,15.3 33.8,19.8 V24.6"/><path d="M33.8,19.8 Q33.8,15.3 38.3,15.3 Q42.8,15.3 42.8,19.8 V24.6"/></g></svg>
<svg style="position:absolute;left:30px;top:900px;" width="70" height="60" viewBox="0 0 70 60"><g fill="none" stroke="#666666" stroke-width="3" stroke-linecap="round" stroke-linejoin="round">
<path d="M26.9,12.5 H40.9 M33.9,12.5 V19.5"/><path d="M15.9,38 Q16.1,20 34.3,20 Q52.5,20 52.7,38"/><path d="M15.5,38 H53.1"/><path d="M19,38 V46.4 M49.4,38 V46.4"/><path d="M15.1,46.4 H53.5"/></g></svg>
<svg style="position:absolute;left:30px;top:970px;" width="70" height="65" viewBox="0 0 70 65"><g fill="none" stroke="#666666" stroke-width="3" stroke-linecap="round" stroke-linejoin="round">
<path d="M22.9,18.7 A17.4,17.4 0 0 1 50.65,37.4"/><path d="M45.97,44.73 A17.4,17.4 0 0 1 18.33,24.65"/>
<path d="M47.6,35.6 L50,40 L54.2,37.8 Z" fill="#666666"/><path d="M13.5,26 L18.7,23.1 L20.3,28 Z" fill="#666666"/>
<path d="M38.6,27.2 Q37.6,24.4 34.1,24.4 Q29.6,24.4 29.6,28.2 Q29.6,31 34.1,31.6 Q38.8,32.4 38.8,35.4 Q38.8,38.8 34.1,38.8 Q30.2,38.8 29.2,36"/><path d="M34.1,21.6 V24.4 M34.1,38.8 V41.8"/></g></svg>
<svg style="position:absolute;left:30px;top:1050px;" width="70" height="60" viewBox="0 0 70 60"><g fill="none" stroke="#666666" stroke-width="3" stroke-linecap="round" stroke-linejoin="round">
<path d="M33.6,10.8 V18.3"/><path d="M15.5,32.3 L33.6,18.6 L52.3,32.3 Z"/><path d="M19.6,32.3 V51.9 M28.9,32.3 V51.9 M39.2,32.3 V51.9 M48.5,32.3 V51.9"/><path d="M15.3,51.9 H52.5"/></g></svg>
<svg style="position:absolute;left:30px;top:1130px;" width="70" height="60" viewBox="0 0 70 60"><g fill="none" stroke="#666666" stroke-width="3" stroke-linecap="round" stroke-linejoin="round">
<circle cx="33.6" cy="19.5" r="5.2"/><path d="M26.4,29.4 Q29.4,26.4 33.6,26.4 Q37.8,26.4 40.8,29.4"/>
<circle cx="23.3" cy="39" r="5.2"/><path d="M15.6,48.6 Q18.6,45.6 23.3,45.6 Q28,45.6 31,48.6"/>
<circle cx="44.8" cy="39" r="5.2"/><path d="M37,48.6 Q40,45.6 44.8,45.6 Q49.6,45.6 52.6,48.6"/></g></svg>
<svg style="position:absolute;left:30px;top:1200px;" width="70" height="60" viewBox="0 0 70 60"><g fill="none" stroke="#666666" stroke-width="3" stroke-linecap="round" stroke-linejoin="round">
<path d="M29.5,23.3 H18.5 Q13.2,23.3 13.2,29.3 Q13.2,35.4 18.5,35.4 H29.5 Z"/><path d="M29.5,23.3 L43.9,17.9 V43.2 L29.5,35.4"/>
<path d="M21.4,35.4 V48 Q21.4,51 25,51 Q28.6,51 28.6,48 V35.4"/><path d="M49.3,23.3 L54.8,22 M49.3,29.3 H54.8 M49.3,35.3 L54.8,37.8"/></g></svg>
<svg style="position:absolute;left:30px;top:1270px;" width="70" height="60" viewBox="0 0 70 60"><g fill="none" stroke="#666666" stroke-width="3" stroke-linecap="round" stroke-linejoin="round"><path d="M30.85,51.8 A19.3,19.3 0 1 1 43.85,16.1"/><path d="M43.85,49.5 A19.3,19.3 0 0 0 51.8,23.5"/><path d="M46.5,24.8 L51.2,21.7 L56.4,24.4"/>
<path d="M34.2,43.6 L27,36 Q24.8,33.4 26.4,30.6 Q28.4,28 31.6,29.2 Q33.4,30 34.2,31.8 Q35,30 36.8,29.2 Q40,28 42,30.6 Q43.6,33.4 41.4,36 Z"/></g></svg>
<div class="t" style="left:1572.73px;top:50.64px;font-size:26.5px;line-height:26.5px;font-weight:bold;color:#ffffff;letter-spacing:0.000px;font-family:'Liberation Serif';">1</div>
<div class="t" style="left:1708.34px;top:49.74px;font-size:26.5px;line-height:26.5px;font-weight:normal;color:#666666;letter-spacing:0.256px;font-family:'Liberation Sans';">Unpublished changes</div>
<div class="t" style="left:2080.87px;top:49.44px;font-size:26.5px;line-height:26.5px;font-weight:normal;color:#666666;letter-spacing:-0.262px;font-family:'Liberation Sans';">Shop</div>
<div class="t" style="left:2253.93px;top:49.74px;font-size:26.5px;line-height:26.5px;font-weight:normal;color:#666666;letter-spacing:0.546px;font-family:'Liberation Sans';">Hannah</div>
<div class="t" style="left:2462.00px;top:49.34px;font-size:26.5px;line-height:26.5px;font-weight:normal;color:#666666;letter-spacing:-0.469px;font-family:'Liberation Sans';">Ask Toast IQ</div>
<div class="t" style="left:2718.43px;top:49.74px;font-size:26.5px;line-height:26.5px;font-weight:normal;color:#666666;letter-spacing:1.048px;font-family:'Liberation Sans';">Help</div>
<div class="t" style="left:104.00px;top:193.74px;font-size:26.5px;line-height:26.5px;font-weight:normal;color:#2e2e2e;letter-spacing:-0.369px;font-family:'Liberation Sans';">Ask Toast IQ</div>
<div class="t" style="left:103.63px;top:342.74px;font-size:26.5px;line-height:26.5px;font-weight:normal;color:#2e2e2e;letter-spacing:0.485px;font-family:'Liberation Sans';">Home</div>
<div class="t" style="left:103.63px;top:414.74px;font-size:26.5px;line-height:26.5px;font-weight:normal;color:#2e2e2e;letter-spacing:0.000px;font-family:'Liberation Sans';">Reports</div>
<div class="t" style="left:103.63px;top:486.24px;font-size:26.5px;line-height:26.5px;font-weight:normal;color:#2e2e2e;letter-spacing:0.258px;font-family:'Liberation Sans';">Discover products</div>
<div class="t" style="left:104.34px;top:628.74px;font-size:26.5px;line-height:26.5px;font-weight:bold;color:#d4380d;letter-spacing:-0.675px;font-family:'Liberation Sans';">Employees</div>
<div class="t" style="left:103.63px;top:700.14px;font-size:26.5px;line-height:26.5px;font-weight:normal;color:#2e2e2e;letter-spacing:0.000px;font-family:'Liberation Sans';">Payroll</div>
<div class="t" style="left:103.63px;top:773.24px;font-size:26.5px;line-height:26.5px;font-weight:normal;color:#2e2e2e;letter-spacing:0.000px;font-family:'Liberation Sans';">Menus</div>
<div class="t" style="left:105.29px;top:845.74px;font-size:26.5px;line-height:26.5px;font-weight:normal;color:#2e2e2e;letter-spacing:0.000px;font-family:'Liberation Sans';">Takeout &amp; delivery</div>
<div class="t" style="left:104.46px;top:917.74px;font-size:26.5px;line-height:26.5px;font-weight:normal;color:#2e2e2e;letter-spacing:0.000px;font-family:'Liberation Sans';">Catering &amp; events</div>
<div class="t" style="left:103.63px;top:988.74px;font-size:26.5px;line-height:26.5px;font-weight:normal;color:#2e2e2e;letter-spacing:0.000px;font-family:'Liberation Sans';">Payments</div>
<div class="t" style="left:103.63px;top:1069.14px;font-size:26.5px;line-height:26.5px;font-weight:normal;color:#2e2e2e;letter-spacing:0.000px;font-family:'Liberation Sans';">Financial products</div>
<div class="t" style="left:104.46px;top:1148.74px;font-size:26.5px;line-height:26.5px;font-weight:normal;color:#2e2e2e;letter-spacing:0.000px;font-family:'Liberation Sans';">Guests</div>
<div class="t" style="left:104.60px;top:1220.34px;font-size:26.5px;line-height:26.5px;font-weight:normal;color:#2e2e2e;letter-spacing:0.520px;font-family:'Liberation Sans';">Advertising</div>
<div class="t" style="left:102.53px;top:1293.74px;font-size:26.5px;line-height:26.5px;font-weight:normal;color:#2e2e2e;letter-spacing:0.000px;font-family:'Liberation Sans';">Marketing</div>
<div style="position:absolute;left:0;top:1180px;width:414px;height:138px;background:linear-gradient(to bottom,rgba(255,255,255,0) 15px,rgba(255,255,255,0.12) 45px,rgba(255,255,255,0.45) 70px,rgba(255,255,255,0.95) 115px,rgba(255,255,255,0.98) 138px)"></div>
<div style="position:absolute;left:90px;top:1250px;width:236px;height:52px;border-radius:26px;background:#e4e4e4"></div>
<svg style="position:absolute;left:120px;top:1262px;" width="30" height="30" viewBox="0 0 30 30"><g fill="none" stroke="#5e5e5e" stroke-width="2.2" stroke-linecap="round" stroke-linejoin="round"><path d="M14,6.6 V23.4"/><path d="M9.6,19.4 L14,23.8 L18.4,19.4"/></g></svg>
<svg style="position:absolute;left:795px;top:160px;" width="20" height="32" viewBox="0 0 20 32"><path d="M14.5,4.8 L6.5,27.6" stroke="#c6c6c6" stroke-width="1.8" stroke-linecap="round"/></svg>
<div style="position:absolute;left:2457px;top:140px;width:131px;height:72px;border-radius:6px;background:#2c50b9"></div>
<div style="position:absolute;left:708px;top:347px;width:1880px;height:2px;background:#d6d6d6;"></div>
<div style="position:absolute;left:1068px;top:398px;width:55px;height:66px;border:2px solid #dedede;border-radius:5px;background:#fff"></div>
<div style="position:absolute;left:1068px;top:518px;width:55px;height:66px;border:2px solid #dedede;border-radius:5px;background:#fff"></div>
<div style="position:absolute;left:1068px;top:638px;width:55px;height:66px;border:2px solid #dedede;border-radius:5px;background:#fff"></div>
<div style="position:absolute;left:1068px;top:758px;width:55px;height:66px;border:2px solid #dedede;border-radius:5px;background:#fff"></div>
<div style="position:absolute;left:708px;top:1029px;width:1880px;height:4px;background:#d5d5d8;"></div>
<div style="position:absolute;left:708px;top:1105px;width:1880px;height:2px;background:#d5d5d8;"></div>
<div style="position:absolute;left:708px;top:1179px;width:1880px;height:2px;background:#d5d5d8;"></div>
<div style="position:absolute;left:708px;top:1253px;width:1880px;height:2px;background:#d5d5d8;"></div>
<div class="t" style="left:166.00px;top:1266.06px;font-size:21px;line-height:21px;font-weight:bold;color:#6a6a6a;letter-spacing:0.094px;font-family:'Liberation Sans';">VIEW MORE</div>
<div class="t" style="left:707.37px;top:161.36px;font-size:28.5px;line-height:28.5px;font-weight:normal;color:#2b4bb6;letter-spacing:-0.014px;font-family:'Liberation Sans';">Home</div>
<div class="t" style="left:829.11px;top:161.36px;font-size:28.5px;line-height:28.5px;font-weight:normal;color:#5f5f5f;letter-spacing:-0.041px;font-family:'Liberation Sans';">Schedule enforcement</div>
<div class="t" style="left:2490.17px;top:163.90px;font-size:27.5px;line-height:27.5px;font-weight:bold;color:#ffffff;letter-spacing:-0.237px;font-family:'Liberation Sans';">Save</div>
<div class="t" style="left:708.11px;top:298.42px;font-size:37.6px;line-height:37.6px;font-weight:bold;color:#6b6b6b;letter-spacing:0.016px;font-family:'Liberation Sans';">Schedule enforcement</div>
<div class="t" style="left:729.77px;top:419.46px;font-size:28.5px;line-height:28.5px;font-weight:normal;color:#2a2a2a;letter-spacing:0.334px;font-family:'Liberation Sans';">Minutes before clock in</div>
<div class="t" style="left:1081.06px;top:419.46px;font-size:28.5px;line-height:28.5px;font-weight:normal;color:#2a2a2a;letter-spacing:2.345px;font-family:'Liberation Sans';">90</div>
<div class="t" style="left:750.77px;top:539.46px;font-size:28.5px;line-height:28.5px;font-weight:normal;color:#2a2a2a;letter-spacing:0.483px;font-family:'Liberation Sans';">Minutes after clock in</div>
<div class="t" style="left:1081.06px;top:539.46px;font-size:28.5px;line-height:28.5px;font-weight:normal;color:#2a2a2a;letter-spacing:2.345px;font-family:'Liberation Sans';">90</div>
<div class="t" style="left:709.47px;top:659.46px;font-size:28.5px;line-height:28.5px;font-weight:normal;color:#2a2a2a;letter-spacing:0.370px;font-family:'Liberation Sans';">Minutes before clock out</div>
<div class="t" style="left:1081.06px;top:659.46px;font-size:28.5px;line-height:28.5px;font-weight:normal;color:#2a2a2a;letter-spacing:2.345px;font-family:'Liberation Sans';">90</div>
<div class="t" style="left:731.57px;top:779.46px;font-size:28.5px;line-height:28.5px;font-weight:normal;color:#2a2a2a;letter-spacing:0.464px;font-family:'Liberation Sans';">Minutes after clock out</div>
<div class="t" style="left:1081.06px;top:779.46px;font-size:28.5px;line-height:28.5px;font-weight:normal;color:#2a2a2a;letter-spacing:2.345px;font-family:'Liberation Sans';">90</div>
<div class="t" style="left:706.22px;top:884.66px;font-size:28.5px;line-height:28.5px;font-weight:normal;color:#2b4bb6;letter-spacing:0.442px;font-family:'Liberation Sans';">restore defaults</div>
<div class="t" style="left:723.45px;top:980.78px;font-size:28px;line-height:28px;font-weight:bold;color:#6b6b6b;letter-spacing:0.653px;font-family:'Liberation Sans';">Date</div>
<div class="t" style="left:902.09px;top:980.78px;font-size:28px;line-height:28px;font-weight:bold;color:#6b6b6b;letter-spacing:-0.651px;font-family:'Liberation Sans';">User</div>
<div class="t" style="left:1385.20px;top:980.78px;font-size:28px;line-height:28px;font-weight:bold;color:#6b6b6b;letter-spacing:-0.532px;font-family:'Liberation Sans';">Job</div>
<div class="t" style="left:1666.05px;top:980.78px;font-size:28px;line-height:28px;font-weight:bold;color:#6b6b6b;letter-spacing:0.021px;font-family:'Liberation Sans';">In</div>
<div class="t" style="left:2136.12px;top:980.78px;font-size:28px;line-height:28px;font-weight:bold;color:#6b6b6b;letter-spacing:0.000px;font-family:'Liberation Sans';">Out</div>
<div class="t" style="left:722.52px;top:1056.06px;font-size:28.5px;line-height:28.5px;font-weight:normal;color:#262626;letter-spacing:-1.596px;font-family:'Liberation Sans';">12/12</div>
<div class="t" style="left:902.51px;top:1056.06px;font-size:28.5px;line-height:28.5px;font-weight:normal;color:#262626;letter-spacing:-0.754px;font-family:'Liberation Sans';">Samwise Gamgee</div>
<div class="t" style="left:1665.22px;top:1056.06px;font-size:28.5px;line-height:28.5px;font-weight:normal;color:#262626;letter-spacing:-0.353px;font-family:'Liberation Sans';">12/12/23 4:00 PM</div>
<div class="t" style="left:2135.12px;top:1056.06px;font-size:28.5px;line-height:28.5px;font-weight:normal;color:#262626;letter-spacing:-0.509px;font-family:'Liberation Sans';">12/12/23 10:00 PM</div>
<div class="t" style="left:722.52px;top:1130.06px;font-size:28.5px;line-height:28.5px;font-weight:normal;color:#262626;letter-spacing:-1.596px;font-family:'Liberation Sans';">12/13</div>
<div class="t" style="left:901.17px;top:1130.06px;font-size:28.5px;line-height:28.5px;font-weight:normal;color:#262626;letter-spacing:-0.064px;font-family:'Liberation Sans';">Bilbo Baggins</div>
<div class="t" style="left:1382.97px;top:1130.06px;font-size:28.5px;line-height:28.5px;font-weight:normal;color:#262626;letter-spacing:-0.280px;font-family:'Liberation Sans';">PM Server</div>
<div class="t" style="left:1665.22px;top:1130.06px;font-size:28.5px;line-height:28.5px;font-weight:normal;color:#262626;letter-spacing:-0.353px;font-family:'Liberation Sans';">12/13/23 4:00 PM</div>
<div class="t" style="left:2135.12px;top:1130.06px;font-size:28.5px;line-height:28.5px;font-weight:normal;color:#262626;letter-spacing:-0.509px;font-family:'Liberation Sans';">12/13/23 10:00 PM</div>
<div class="t" style="left:722.52px;top:1204.06px;font-size:28.5px;line-height:28.5px;font-weight:normal;color:#262626;letter-spacing:-1.596px;font-family:'Liberation Sans';">12/13</div>
<div class="t" style="left:901.17px;top:1204.06px;font-size:28.5px;line-height:28.5px;font-weight:normal;color:#262626;letter-spacing:-0.124px;font-family:'Liberation Sans';">Legolas Greenleaf</div>
<div class="t" style="left:1382.97px;top:1204.06px;font-size:28.5px;line-height:28.5px;font-weight:normal;color:#262626;letter-spacing:0.376px;font-family:'Liberation Sans';">Bartender</div>
<div class="t" style="left:1665.22px;top:1204.06px;font-size:28.5px;line-height:28.5px;font-weight:normal;color:#262626;letter-spacing:-0.353px;font-family:'Liberation Sans';">12/13/23 4:00 PM</div>
<div class="t" style="left:2135.12px;top:1204.06px;font-size:28.5px;line-height:28.5px;font-weight:normal;color:#262626;letter-spacing:-0.509px;font-family:'Liberation Sans';">12/13/23 10:00 PM</div>
<div class="t" style="left:722.52px;top:1278.06px;font-size:28.5px;line-height:28.5px;font-weight:normal;color:#262626;letter-spacing:-1.596px;font-family:'Liberation Sans';">12/13</div>
<div class="t" style="left:901.17px;top:1278.06px;font-size:28.5px;line-height:28.5px;font-weight:normal;color:#262626;letter-spacing:0.296px;font-family:'Liberation Sans';">Merry Brandybuck</div>
<div class="t" style="left:1382.97px;top:1278.06px;font-size:28.5px;line-height:28.5px;font-weight:normal;color:#262626;letter-spacing:0.376px;font-family:'Liberation Sans';">Bartender</div>
<div class="t" style="left:1665.22px;top:1278.06px;font-size:28.5px;line-height:28.5px;font-weight:normal;color:#262626;letter-spacing:-0.353px;font-family:'Liberation Sans';">12/13/23 4:00 PM</div>
<div class="t" style="left:2135.12px;top:1278.06px;font-size:28.5px;line-height:28.5px;font-weight:normal;color:#262626;letter-spacing:-0.509px;font-family:'Liberation Sans';">12/13/23 10:00 PM</div>
<div style="position:absolute;left:669px;top:271px;width:494px;height:567.5px;border:10.5px solid #f5813d;border-radius:5px;box-sizing:content-box"></div>
<svg style="position:absolute;left:2240px;top:180px;" width="220" height="170" viewBox="0 0 220 170"><path d="M21.6,149.6 L147.6,35.4 L140.2,26.2 L194.2,16.6 L170.4,64.8 L163.2,56.8 L22.8,150.6 Z" fill="#f5813d" stroke="#f5813d" stroke-width="2.4" stroke-linejoin="round"/></svg>
<div style="position:absolute;left:2744px;top:1182px;width:96px;height:96px;border-radius:48px;background:#2c50b9;box-shadow:0 4px 18px rgba(0,0,0,0.16)"></div>
<svg style="position:absolute;left:2744px;top:1182px;" width="96" height="96" viewBox="0 0 96 96"><path d="M48,24 A24,24 0 1 0 61,68.2 Q64.5,71.5 68.6,71.2 Q66.2,68 66.2,63.8 A24,24 0 0 0 48,24 Z" fill="#fff"/>
<g transform="translate(35.1,33.9) scale(0.6066,0.612) translate(-12.8,-11.8)"><path fill="none" stroke="#2c50b9" stroke-width="4.9" stroke-linejoin="round" d="M17.3,24.8 C13.2,22.6 12.6,19 15.6,16.3 C20.5,12.3 27,11.8 34,11.8 C41,11.8 48,12.6 52.6,17.6 C55,20.6 54.4,23.5 51.6,25.6 C54.6,28.4 55.5,31.5 55.5,38 L55.5,49.5 C55.5,52.5 54,53.6 51,53.6 C45,53.6 40,52.3 34,52.3 C28,52.3 23,53.8 17,53.8 C14.5,53.8 12.8,52.3 12.8,49 L12.8,38 C12.8,31.5 14,28.5 17.3,24.8 Z"/></g></svg>
<script>(function(){var w=window.innerWidth;if(w&&Math.abs(w-2880)>40){document.body.style.zoom=(w/2880);}})();</script>
</body></html>
